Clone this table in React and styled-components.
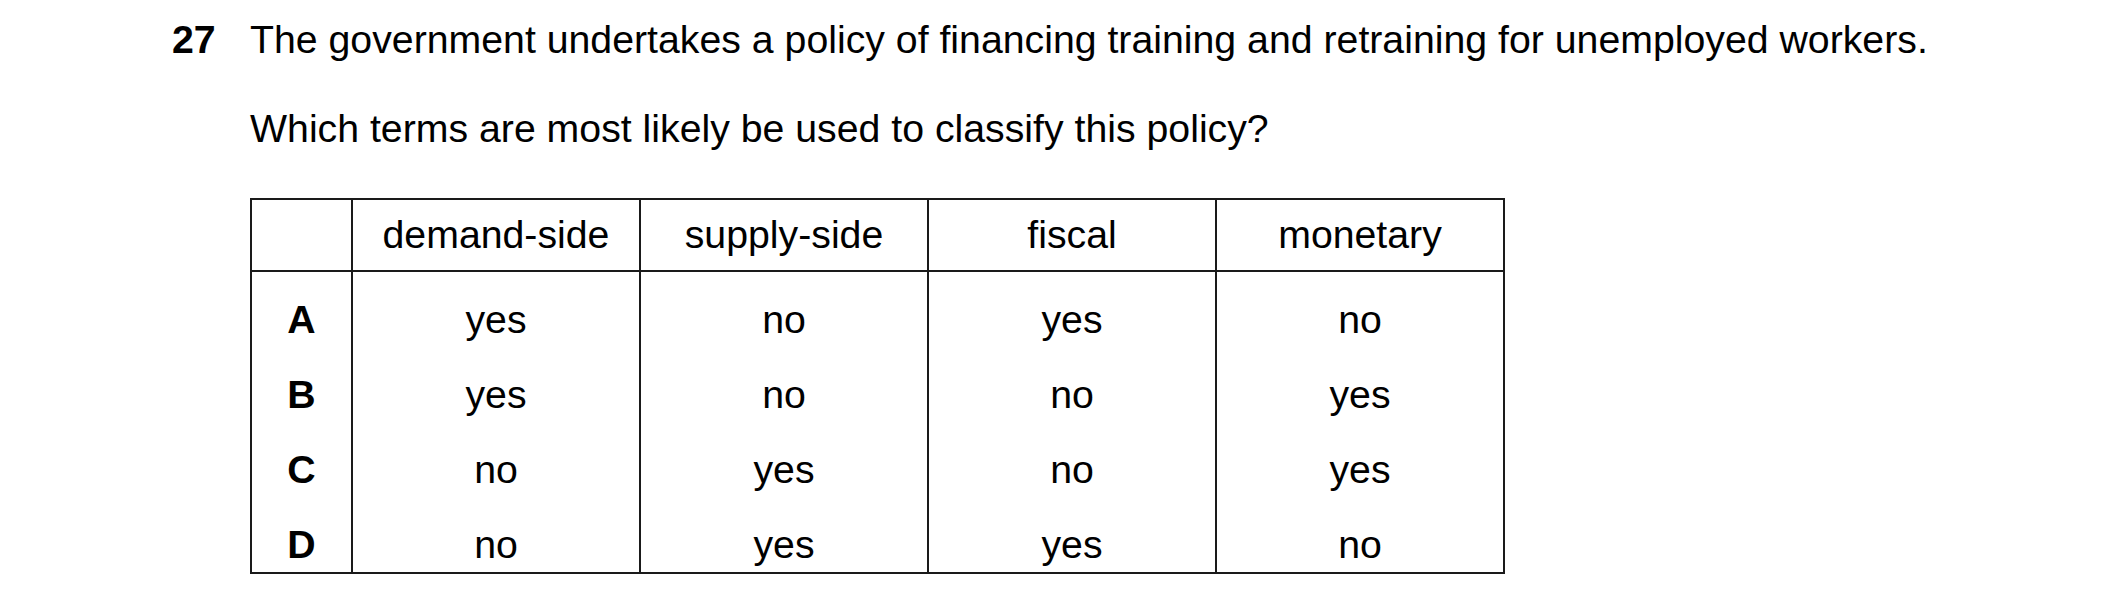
import React from "react";
import styled, { createGlobalStyle } from "styled-components";

const GlobalStyle = createGlobalStyle`
  body {
    margin: 0;
    background: #fff;
    color: #000;
    font-family: "Liberation Sans", Arial, Helvetica, sans-serif;
  }
`;

const columns = ["demand-side", "supply-side", "fiscal", "monetary"];

const options = [
  { key: "A", values: ["yes", "no", "yes", "no"] },
  { key: "B", values: ["yes", "no", "no", "yes"] },
  { key: "C", values: ["no", "yes", "no", "yes"] },
  { key: "D", values: ["no", "yes", "yes", "no"] },
];

function App() {
  return (
    <>
      <GlobalStyle />
      <Page>
        <Question>
          <Number>27</Number>
          <Body>
            <Stem>
              The government undertakes a policy of financing training and
              retraining for unemployed workers.
            </Stem>
            <Prompt>Which terms are most likely be used to classify this policy?</Prompt>
            <Grid>
              <HeadCell />
              {columns.map((c) => (
                <HeadCell key={c}>{c}</HeadCell>
              ))}
              {options.map((row, i) => {
                const last = i === options.length - 1;
                return (
                  <React.Fragment key={row.key}>
                    <LabelCell $last={last}>{row.key}</LabelCell>
                    {row.values.map((v, j) => (
                      <Cell key={j} $last={last}>
                        {v}
                      </Cell>
                    ))}
                  </React.Fragment>
                );
              })}
            </Grid>
          </Body>
        </Question>
      </Page>
    </>
  );
}

const Page = styled.div`
  padding: 17px 0 0 172px;
`;

const Question = styled.div`
  display: flex;
  font-size: 39.25px;
  line-height: 45px;
`;

const Number = styled.div`
  width: 78px;
  flex-shrink: 0;
  font-weight: bold;
`;

const Body = styled.div`
  display: flex;
  flex-direction: column;
  align-items: flex-start;
`;

const Stem = styled.p`
  margin: 0;
  white-space: nowrap;
`;

const Prompt = styled.p`
  margin: 44px 0 0;
`;

const Grid = styled.div`
  margin-top: 47px;
  display: grid;
  grid-template-columns: 101px repeat(4, 288px);
  border-top: 2px solid #1a1a1a;
  border-left: 2px solid #1a1a1a;
`;

const Cell = styled.div`
  box-sizing: border-box;
  text-align: center;
  border-right: 2px solid #1a1a1a;
  border-bottom: ${(p) => (p.$last ? "2px solid #1a1a1a" : "none")};
  padding: 25px 0 5px;
`;

const HeadCell = styled(Cell)`
  padding: 12px 0 13px;
  border-bottom: 2px solid #1a1a1a;
`;

const LabelCell = styled(Cell)`
  font-weight: bold;
`;

export default App;
